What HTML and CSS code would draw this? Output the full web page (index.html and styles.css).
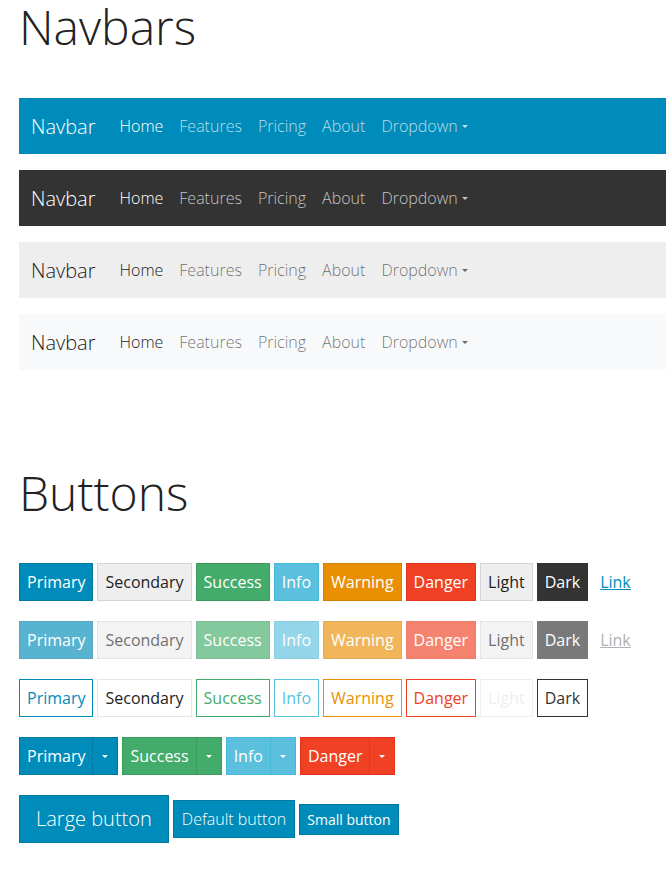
FILE: index.html
```html
<!DOCTYPE html>
<html lang="en">
<head>
<meta charset="utf-8">
<title>Navbars and Buttons</title>
<link rel="stylesheet" href="styles.css">
</head>
<body>
<div class="page">
  <h1 class="heading">Navbars</h1>

  <nav class="navbar navbar-primary">
    <span class="brand">Navbar</span>
    <a class="nav-link active">Home</a>
    <a class="nav-link">Features</a>
    <a class="nav-link">Pricing</a>
    <a class="nav-link">About</a>
    <a class="nav-link">Dropdown<span class="caret"></span></a>
  </nav>
  <nav class="navbar navbar-dark">
    <span class="brand">Navbar</span>
    <a class="nav-link active">Home</a>
    <a class="nav-link">Features</a>
    <a class="nav-link">Pricing</a>
    <a class="nav-link">About</a>
    <a class="nav-link">Dropdown<span class="caret"></span></a>
  </nav>
  <nav class="navbar navbar-light">
    <span class="brand">Navbar</span>
    <a class="nav-link active">Home</a>
    <a class="nav-link">Features</a>
    <a class="nav-link">Pricing</a>
    <a class="nav-link">About</a>
    <a class="nav-link">Dropdown<span class="caret"></span></a>
  </nav>
  <nav class="navbar navbar-tertiary">
    <span class="brand">Navbar</span>
    <a class="nav-link active">Home</a>
    <a class="nav-link">Features</a>
    <a class="nav-link">Pricing</a>
    <a class="nav-link">About</a>
    <a class="nav-link">Dropdown<span class="caret"></span></a>
  </nav>

  <h1 class="heading heading-buttons">Buttons</h1>

  <div class="btn-row">
    <button class="btn primary">Primary</button>
    <button class="btn secondary">Secondary</button>
    <button class="btn success">Success</button>
    <button class="btn info">Info</button>
    <button class="btn warning">Warning</button>
    <button class="btn danger">Danger</button>
    <button class="btn light">Light</button>
    <button class="btn dark">Dark</button>
    <button class="btn link">Link</button>
  </div>

  <div class="btn-row disabled">
    <button class="btn primary">Primary</button>
    <button class="btn secondary">Secondary</button>
    <button class="btn success">Success</button>
    <button class="btn info">Info</button>
    <button class="btn warning">Warning</button>
    <button class="btn danger">Danger</button>
    <button class="btn light">Light</button>
    <button class="btn dark">Dark</button>
    <button class="btn link">Link</button>
  </div>

  <div class="btn-row">
    <button class="btn outline-primary">Primary</button>
    <button class="btn outline-secondary">Secondary</button>
    <button class="btn outline-success">Success</button>
    <button class="btn outline-info">Info</button>
    <button class="btn outline-warning">Warning</button>
    <button class="btn outline-danger">Danger</button>
    <button class="btn outline-light">Light</button>
    <button class="btn outline-dark">Dark</button>
  </div>

  <div class="btn-row">
    <div class="btn-group">
      <button class="btn primary">Primary</button>
      <button class="btn primary toggle"><span class="caret"></span></button>
    </div>
    <div class="btn-group">
      <button class="btn success">Success</button>
      <button class="btn success toggle"><span class="caret"></span></button>
    </div>
    <div class="btn-group">
      <button class="btn info">Info</button>
      <button class="btn info toggle"><span class="caret"></span></button>
    </div>
    <div class="btn-group">
      <button class="btn danger">Danger</button>
      <button class="btn danger toggle"><span class="caret"></span></button>
    </div>
  </div>

  <div class="btn-row sizes">
    <button class="btn primary lg">Large button</button>
    <button class="btn primary md">Default button</button>
    <button class="btn primary sm">Small button</button>
  </div>
</div>
</body>
</html>
```

FILE: styles.css
```css
html, body {
  margin: 0;
  padding: 0;
  overflow: hidden;
  background: #fff;
}

body {
  font-family: "Open Sans", "Liberation Sans", sans-serif;
  color: #222;
  font-weight: 300;
}

.page {
  padding-left: 19px;
}

.heading {
  margin: 0;
  font-size: 48px;
  line-height: 54px;
  font-weight: 300;
  color: #222;
}

.heading-buttons {
  margin-top: 96px;
  margin-bottom: 43px;
}

/* navbars */
.navbar {
  height: 56px;
  display: flex;
  align-items: center;
  padding-left: 12px;
  margin-top: 16px;
}

.heading + .navbar {
  margin-top: 44px;
}

.brand {
  font-size: 20px;
  font-weight: 300;
  margin-right: 16px;
}

.nav-link {
  font-size: 16px;
  font-weight: 300;
  padding: 8px;
  display: flex;
  align-items: center;
}

.caret {
  display: inline-block;
  width: 0;
  height: 0;
  border-left: 3.5px solid transparent;
  border-right: 3.5px solid transparent;
  border-top: 3.5px solid currentColor;
  margin-left: 4px;
  margin-top: 1px;
}

.navbar-primary { background: #008cba; }
.navbar-dark { background: #333; }
.navbar-light { background: #eee; }
.navbar-tertiary { background: #f8f9fa; }

.navbar-primary .brand,
.navbar-dark .brand { color: #fff; }

.navbar-primary .nav-link,
.navbar-dark .nav-link { color: rgba(255, 255, 255, 0.72); }

.navbar-primary .nav-link.active,
.navbar-dark .nav-link.active { color: #fff; }

.navbar-light .brand,
.navbar-tertiary .brand { color: #222; }

.navbar-light .nav-link,
.navbar-tertiary .nav-link { color: rgba(0, 0, 0, 0.56); }

.navbar-light .nav-link.active,
.navbar-tertiary .nav-link.active { color: #222; }

/* buttons */
.btn-row {
  display: flex;
  align-items: center;
  gap: 4px;
  margin-bottom: 20px;
}

.btn {
  font-family: "Open Sans", "Liberation Sans", sans-serif;
  font-size: 16px;
  font-weight: 400;
  line-height: 24px;
  padding: 6px 7px;
  border: 1px solid transparent;
  border-radius: 0;
  background: transparent;
  color: #fff;
  cursor: pointer;
  margin: 0;
}

.btn.primary { background: #008cba; border-color: #0079a1; }
.btn.secondary { background: #eee; border-color: #d5d5d5; color: #222; }
.btn.success { background: #43ac6a; border-color: #3c9a5f; }
.btn.info { background: #5bc0de; border-color: #46b8da; }
.btn.warning { background: #e99002; border-color: #d08002; }
.btn.danger { background: #f04124; border-color: #e0371b; }
.btn.light { background: #eee; border-color: #d5d5d5; color: #222; }
.btn.dark { background: #333; border-color: #333; }
.btn.link { color: #008cba; text-decoration: underline; }

.disabled .btn { opacity: 0.65; }
.disabled .btn.link { color: #888; }

.btn.outline-primary { border-color: #008cba; color: #008cba; }
.btn.outline-secondary { border-color: #e6e6e6; color: #222; }
.btn.outline-success { border-color: #43ac6a; color: #43ac6a; }
.btn.outline-info { border-color: #5bc0de; color: #5bc0de; }
.btn.outline-warning { border-color: #e99002; color: #e99002; }
.btn.outline-danger { border-color: #f04124; color: #f04124; }
.btn.outline-light { border-color: #eee; color: #eee; }
.btn.outline-dark { border-color: #333; color: #333; }

.btn-group {
  display: flex;
}

.btn.toggle {
  margin-left: -1px;
  padding-left: 9px;
  padding-right: 9px;
  display: flex;
  align-items: center;
}

.btn.toggle .caret {
  margin: 0;
  border-left-width: 3px;
  border-right-width: 3px;
  border-top-width: 3px;
}

.btn.lg {
  font-size: 20px;
  font-weight: 300;
  line-height: 30px;
  padding: 8px 16px;
}

.btn.md {
  font-weight: 300;
  padding: 6px 8px;
}

.btn.sm {
  font-size: 14px;
  font-weight: 400;
  line-height: 21px;
  padding: 4px 7px;
}
```
